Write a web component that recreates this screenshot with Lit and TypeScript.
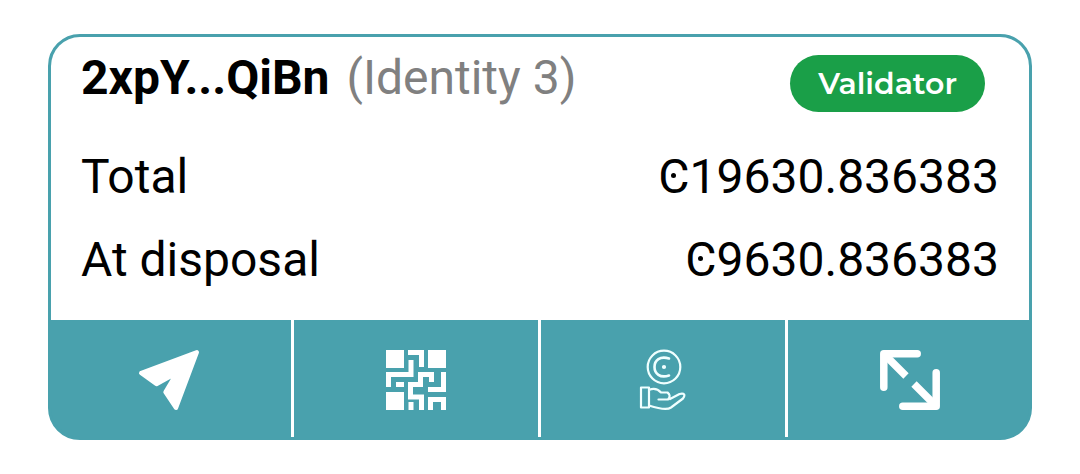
import { LitElement, html, css, svg } from "lit";
import { customElement } from "lit/decorators.js";

const icons = {
  send: svg`<path d="M2.200 23 57.800 2.200 37 57.800 26.500 42 34.500 28.500Q34.500 25.500 31 26.500L17.500 34Z" fill="#fff" stroke="#fff" stroke-width="4.400" stroke-linejoin="round"/>`,
  code: svg`<g fill="#fff"><path d="M0 0H18V18H0ZM42 0H60V18H42ZM0 42H18V60H0Z"/></g>
    <path fill="none" stroke="#fff" stroke-width="5" d="M22 2.500H35.500V17M25 10V24.500H2.500V37M10 34.500H18M22 34.500H34.500V24.500H45.500V32M57.500 22V39.500H42M24.500 34V47H35.500V60M25 52V60M44.500 60V49.500H57.500V60"/>`,
  earn: svg`<g fill="none" stroke="#f0ffff" stroke-width="2.200" stroke-linecap="round" stroke-linejoin="round">
    <circle cx="31" cy="17" r="16.300"/><path stroke-width="2.600" d="M36 8.500C27 5.500 21.500 10.500 21.500 17S27 28.500 36 25.500"/><circle cx="31" cy="17" r="1" fill="#fff"/>
    <path d="M8 37.500H16V57.500H8ZM16 40Q23 37 28 42.500H34.500Q38.500 45.500 35 49.500H25.500M37 49 46.500 44Q54 42.500 50 48.500L38 57.500Q33 61 16 55.500"/></g>`,
  expand: svg`<g fill="none" stroke="#fff" stroke-width="7.500" stroke-linejoin="round"><path stroke-linecap="round" d="M3.800 37.200V3.800H37.200M56.200 22.800V56.200H22.800"/><path d="M4 4 26 26M34 34 56 56"/></g>`,
};

@customElement("app-root")
class AppRoot extends LitElement {
  static styles = css`
    :host { display: block; padding: 34px 48px; font-family: Roboto, "Noto Sans", sans-serif; color: #000; background: #fff; }
    .card { border: 3px solid #49a1ad; border-radius: 32px; background: #49a1ad; }
    .body { padding: 13px 30px 32px; border-radius: 29px 29px 0 0; background: #fff; font-size: 48px; line-height: 56px; }
    .head { display: flex; justify-content: space-between; align-items: flex-start; margin-bottom: 37px; }
    .name { margin: 0; font-size: 48px; font-weight: 700; }
    .label { font-weight: 400; color: #808080; margin-left: 5px; }
    .badge { margin: 5px 14px 0 0; padding: 0 28px; border-radius: 29px; background: #1a9f48; color: #fff; font: 600 30px/57px Montserrat, Inter, sans-serif; }
    .rows { display: grid; gap: 27px; margin: 0; }
    .row { display: flex; justify-content: space-between; }
    dd { margin: 0; }
    .coin { position: relative; display: inline-block; }
    .coin::after { content: ""; position: absolute; inset: 0 0 3px; margin: auto; width: 5px; height: 5px; border-radius: 50%; background: #000; }
    .actions { display: grid; grid-template-columns: repeat(4, 1fr); gap: 3px; margin: 0 -3px 0 -4px; }
    button { display: flex; justify-content: center; align-items: center; padding: 30px 0 27px; border: 0; background: none; cursor: pointer; }
    button + button { box-shadow: -3px 0 #fff; }
    svg { width: 60px; height: 60px; overflow: visible; }
  `;

  action(label: string, icon: unknown) {
    return html`<button type="button" aria-label=${label}><svg viewBox="0 0 60 60" aria-hidden="true">${icon}</svg></button>`;
  }

  amount(value: string) {
    return html`<dd><span class="coin">C</span>${value}</dd>`;
  }

  render() {
    return html`<section class="card">
      <div class="body">
        <header class="head">
          <h1 class="name">2xpY...QiBn <span class="label">(Identity 3)</span></h1>
          <span class="badge">Validator</span>
        </header>
        <dl class="rows">
          <div class="row"><dt>Total</dt>${this.amount("19630.836383")}</div>
          <div class="row"><dt>At disposal</dt>${this.amount("9630.836383")}</div>
        </dl>
      </div>
      <nav class="actions" aria-label="Account actions">
        ${this.action("Send", icons.send)}
        ${this.action("Receive", icons.code)}
        ${this.action("Earn", icons.earn)}
        ${this.action("More", icons.expand)}
      </nav>
    </section>`;
  }
}
